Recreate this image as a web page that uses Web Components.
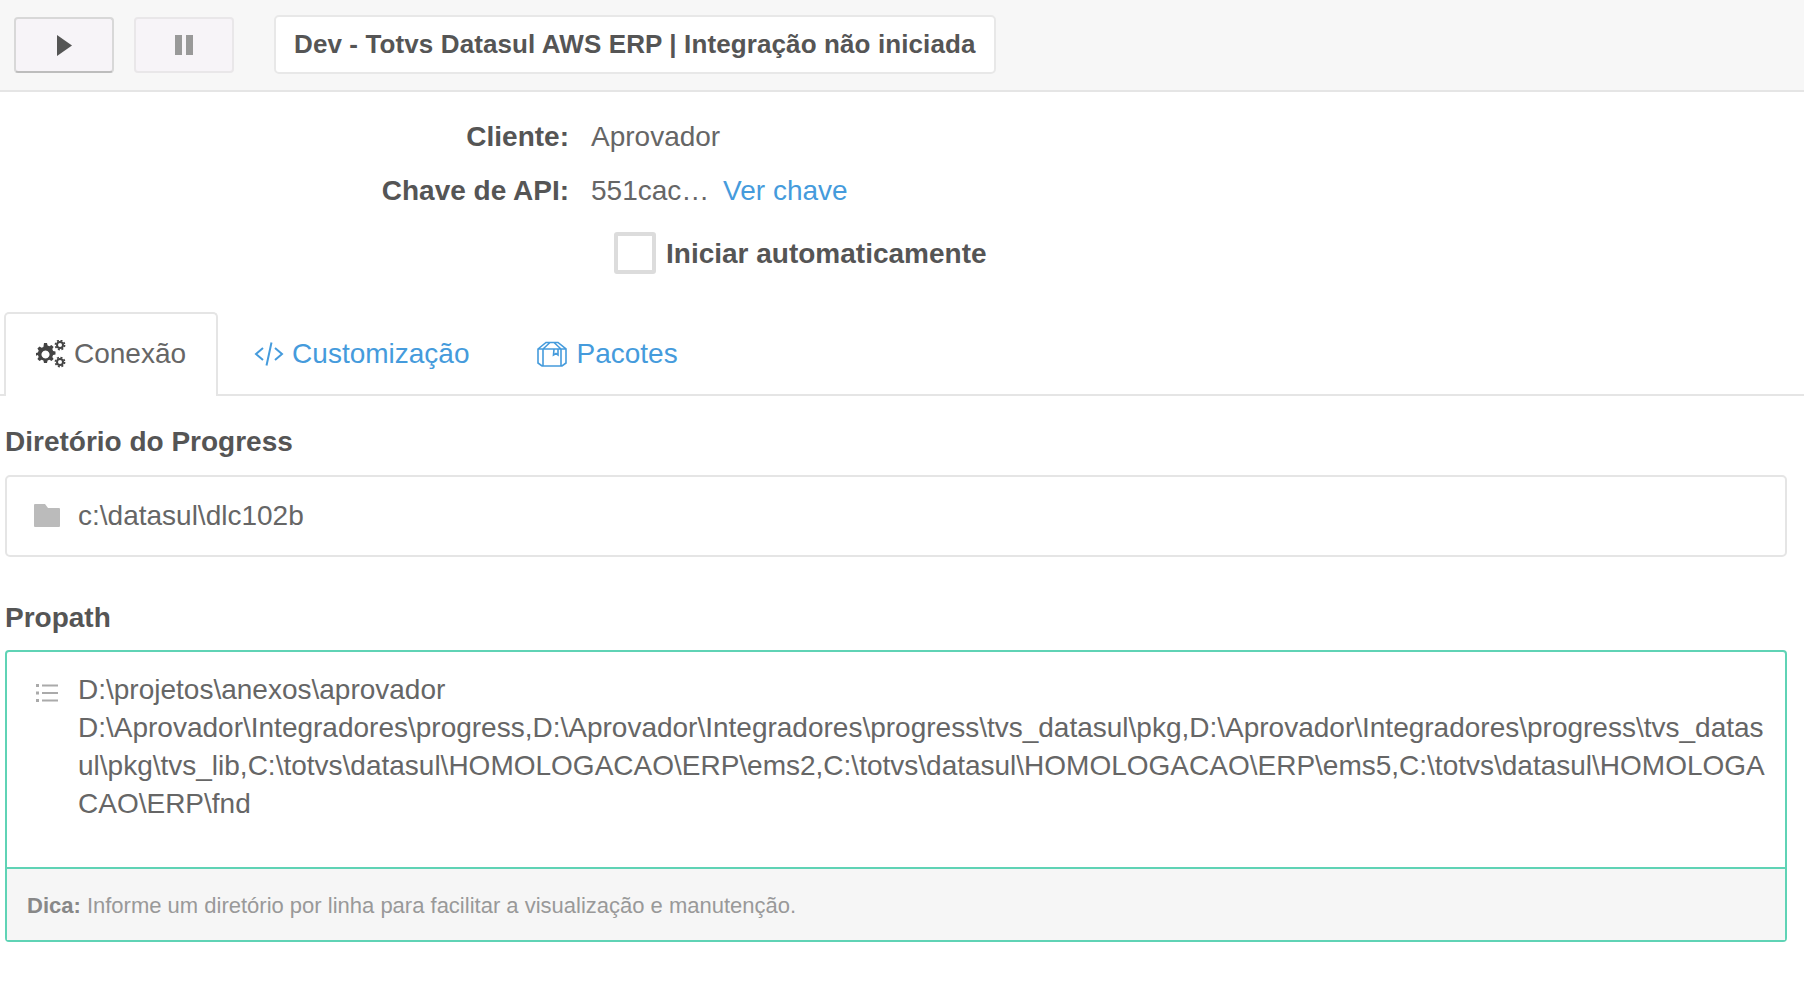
<!DOCTYPE html>
<html lang="pt-BR">
<head>
<meta charset="utf-8">
<title>Integração</title>
<style>
  html, body { margin: 0; padding: 0; background: #fff; }
  body { font-family: "Liberation Sans", Arial, sans-serif; color: #666; font-size: 28px; }
</style>
</head>
<body>

<integration-toolbar status="Dev - Totvs Datasul AWS ERP | Integração não iniciada"></integration-toolbar>

<client-info client="Aprovador" api-key="551cac…"></client-info>

<tab-bar>
  <tab-item active label="Conexão">
    <svg slot="icon" width="30" height="28" viewBox="0 0 30 28">
      <g fill="#444"><path fill-rule="evenodd" d="M8 3h3l.6 2.400 1.800.8 2.100-1.300 2.100 2.100-1.300 2.100.8 1.800 2.400.6v3l-2.400.6-.8 1.800 1.300 2.100-2.100 2.100-2.100-1.300-1.800.8-.6 2.400H8l-.6-2.400-1.800-.8-2.100 1.300-2.100-2.100 1.300-2.100-.8-1.800L-.5 16v-3l2.400-.6.8-1.800-1.300-2.100L3.500 6.400l2.100 1.300 1.800-.8zM9.500 10.500a4 4 0 1 0 .01 0z"/></g>
      <g fill="none" stroke="#444">
        <circle cx="24" cy="5" r="3" stroke-width="2"/>
        <circle cx="24" cy="5" r="4.600" stroke-width="1.600" stroke-dasharray="2 1.600"/>
        <circle cx="24" cy="22" r="3" stroke-width="2"/>
        <circle cx="24" cy="22" r="4.600" stroke-width="1.600" stroke-dasharray="2 1.600"/>
      </g>
    </svg>
  </tab-item>
  <tab-item label="Customização" style="padding-right:29px">
    <svg slot="icon" width="30" height="26" viewBox="0 0 30 26" fill="none" stroke="#459bdc" stroke-width="2"><path d="M9 7l-7 6 7 6M21 7l7 6-7 6M17.500 1.500l-5 23"/></svg>
  </tab-item>
  <tab-item label="Pacotes" style="gap:10px">
    <svg slot="icon" width="30" height="26" viewBox="0 0 30 26" fill="none" stroke="#459bdc" stroke-width="1.600"><path d="M1 8l8-6.500h12L29 8v14l-4 3H5l-4-3zM1 8h28M6 25V8l7-6.500M24 25V8l-7-6.500M17 8l-.5 6 2.500-1.500 2 1.500V8"/></svg>
  </tab-item>
</tab-bar>

<form-field label="Diretório do Progress">
  <icon-input value="c:\datasul\dlc102b">
    <svg slot="icon" width="26" height="23" viewBox="0 0 26 23"><path fill="#bbb" d="M0 1a1 1 0 0 1 1-1h10l3 4h11a1 1 0 0 1 1 1v17a1 1 0 0 1-1 1H1a1 1 0 0 1-1-1z"/></svg>
  </icon-input>
</form-field>

<form-field label="Propath" class="propath" style="padding-top:44px;--label-height:49px">
  <path-editor hint="Informe um diretório por linha para facilitar a visualização e manutenção.">
    <svg slot="icon" width="22" height="20" viewBox="0 0 22 20" fill="#aaa"><path d="M0 1h3v3H0zM0 8.500h3v3H0zM0 16h3v3H0zM6 1.500h16v2H6zM6 9h16v2H6zM6 16.500h16v2H6z"/></svg>
    <div>D:\projetos\anexos\aprovador</div>
    <div>D:\Aprovador\Integradores\progress,D:\Aprovador\Integradores\progress\tvs_datasul\pkg,D:\Aprovador\Integradores\progress\tvs_datasul\pkg\tvs_lib,C:\totvs\datasul\HOMOLOGACAO\ERP\ems2,C:\totvs\datasul\HOMOLOGACAO\ERP\ems5,C:\totvs\datasul\HOMOLOGACAO\ERP\fnd</div>
  </path-editor>
</form-field>

<script>
class IntegrationToolbar extends HTMLElement {
  constructor() {
    super();
    this.attachShadow({ mode: 'open' });
  }

  connectedCallback() {
    this.shadowRoot.innerHTML = `
      <style>
        :host {
          display: flex;
          align-items: center;
          box-sizing: border-box;
          height: 92px;
          padding: 0 0 0 14px;
          background: #f7f7f7;
          border-bottom: 2px solid #e5e5e5;
        }
        button {
          display: flex;
          align-items: center;
          justify-content: center;
          box-sizing: border-box;
          width: 100px;
          height: 56px;
          padding: 0;
          margin-right: 20px;
          background: #f7f4f8;
          border: 2px solid #e9e7e9;
          border-radius: 4px;
        }
        button.play { border-color: #d8d8d8; border-bottom-color: #bdbdbd; }
        .status {
          box-sizing: border-box;
          width: 722px;
          height: 59px;
          margin: -2px 0 0 20px;
          padding: 0 18px;
          line-height: 54px;
          letter-spacing: .11px;
          white-space: nowrap;
          background: #fff;
          border: 2px solid #e8e8e8;
          border-radius: 5px;
          font-size: 26px;
          font-weight: 700;
          color: #555;
        }
      </style>
      <button class="play" aria-label="Iniciar">
        <svg width="15" height="21" viewBox="0 0 15 21"><path fill="#555" d="M0 0l15 10.500L0 21z"/></svg>
      </button>
      <button class="pause" aria-label="Pausar">
        <svg width="18" height="20" viewBox="0 0 18 20" fill="#999"><path d="M0 0h7v20H0zM11 0h7v20h-7z"/></svg>
      </button>
      <div class="status">${this.getAttribute('status')}</div>
    `;
  }
}

class ClientInfo extends HTMLElement {
  constructor() {
    super();
    this.attachShadow({ mode: 'open' });
  }

  connectedCallback() {
    this.shadowRoot.innerHTML = `
      <style>
        :host {
          display: grid;
          grid-template-columns: 569px 1fr;
          column-gap: 22px;
          grid-auto-rows: 54px;
          align-items: center;
          padding-top: 18px;
          height: 220px;
          box-sizing: border-box;
          font-size: 28px;
          line-height: 40px;
        }
        .key { text-align: right; font-weight: 700; color: #555; }
        a { color: #459bdc; text-decoration: none; margin-left: 6px; }
        .auto {
          grid-column: 2;
          display: flex;
          align-items: center;
          gap: 10px;
          margin: 16px 0 0 23px;
          font-weight: 700;
          font-size: 28px;
          color: #555;
        }
        .auto span:last-child { padding-top: 2px; }
        .box {
          box-sizing: border-box;
          width: 42px;
          height: 42px;
          background: #fff;
          border: 4px solid #dcdcdc;
          border-radius: 3px;
        }
      </style>
      <div class="key">Cliente:</div>
      <div>${this.getAttribute('client')}</div>
      <div class="key">Chave de API:</div>
      <div>${this.getAttribute('api-key')} <a href="#">Ver chave</a></div>
      <label class="auto"><span class="box"></span><span>Iniciar automaticamente</span></label>
    `;
  }
}

class TabBar extends HTMLElement {
  constructor() {
    super();
    this.attachShadow({ mode: 'open' });
  }

  connectedCallback() {
    this.shadowRoot.innerHTML = `
      <style>
        :host {
          display: flex;
          box-sizing: border-box;
          height: 84px;
          padding-left: 4px;
          border-bottom: 2px solid #e5e5e5;
        }
      </style>
      <slot></slot>
    `;
  }
}

class TabItem extends HTMLElement {
  constructor() {
    super();
    this.attachShadow({ mode: 'open' });
  }

  connectedCallback() {
    this.shadowRoot.innerHTML = `
      <style>
        :host {
          display: flex;
          align-items: center;
          gap: 8px;
          box-sizing: border-box;
          height: 84px;
          padding: 0 26px 2px 34px;
          font-size: 28px;
          color: #459bdc;
          border: 2px solid transparent;
          border-bottom: 0;
          border-radius: 5px 5px 0 0;
        }
        :host([active]) {
          color: #666;
          background: #fff;
          border-color: #e5e5e5;
          padding: 0 30px 2px;
        }
        ::slotted(svg) { flex: none; }
      </style>
      <slot name="icon"></slot>
      <span>${this.getAttribute('label')}</span>
    `;
  }
}

class FormField extends HTMLElement {
  constructor() {
    super();
    this.attachShadow({ mode: 'open' });
  }

  connectedCallback() {
    this.shadowRoot.innerHTML = `
      <style>
        :host {
          display: block;
          padding: 29px 17px 0 5px;
        }
        .label {
          height: var(--label-height, 50px);
          line-height: 34px;
          font-size: 28px;
          font-weight: 700;
          color: #555;
        }
      </style>
      <div class="label">${this.getAttribute('label')}</div>
      <slot></slot>
    `;
  }
}

class IconInput extends HTMLElement {
  constructor() {
    super();
    this.attachShadow({ mode: 'open' });
  }

  connectedCallback() {
    this.shadowRoot.innerHTML = `
      <style>
        :host {
          display: flex;
          align-items: center;
          box-sizing: border-box;
          height: 82px;
          padding-left: 27px;
          gap: 18px;
          font-size: 28px;
          border: 2px solid #e5e5e5;
          border-radius: 5px;
        }
        ::slotted(svg) { flex: none; margin-top: -2px; }
      </style>
      <slot name="icon"></slot>
      <span>${this.getAttribute('value')}</span>
    `;
  }
}

class PathEditor extends HTMLElement {
  constructor() {
    super();
    this.attachShadow({ mode: 'open' });
  }

  connectedCallback() {
    this.shadowRoot.innerHTML = `
      <style>
        :host {
          display: block;
          box-sizing: border-box;
          border: 2px solid #5fd3b5;
          border-radius: 4px;
        }
        .body {
          display: flex;
          box-sizing: border-box;
          height: 215px;
          padding: 19px 19px 0 29px;
          gap: 20px;
          font-size: 28px;
          line-height: 38px;
        }
        .lines { flex: 1; min-width: 0; word-break: break-all; }
        .icon { flex: none; width: 22px; padding-top: 4px; }
        .hint {
          box-sizing: border-box;
          height: 73px;
          padding-left: 20px;
          line-height: 73px;
          font-size: 22px;
          color: #999;
          background: #f6f6f6;
          border-top: 2px solid #5fd3b5;
        }
        b { color: #888; }
      </style>
      <div class="body">
        <div class="icon"><slot name="icon"></slot></div>
        <div class="lines"><slot></slot></div>
      </div>
      <div class="hint"><b>Dica:</b> ${this.getAttribute('hint')}</div>
    `;
  }
}

customElements.define('integration-toolbar', IntegrationToolbar);
customElements.define('client-info', ClientInfo);
customElements.define('tab-bar', TabBar);
customElements.define('tab-item', TabItem);
customElements.define('form-field', FormField);
customElements.define('icon-input', IconInput);
customElements.define('path-editor', PathEditor);
</script>
</body>
</html>
